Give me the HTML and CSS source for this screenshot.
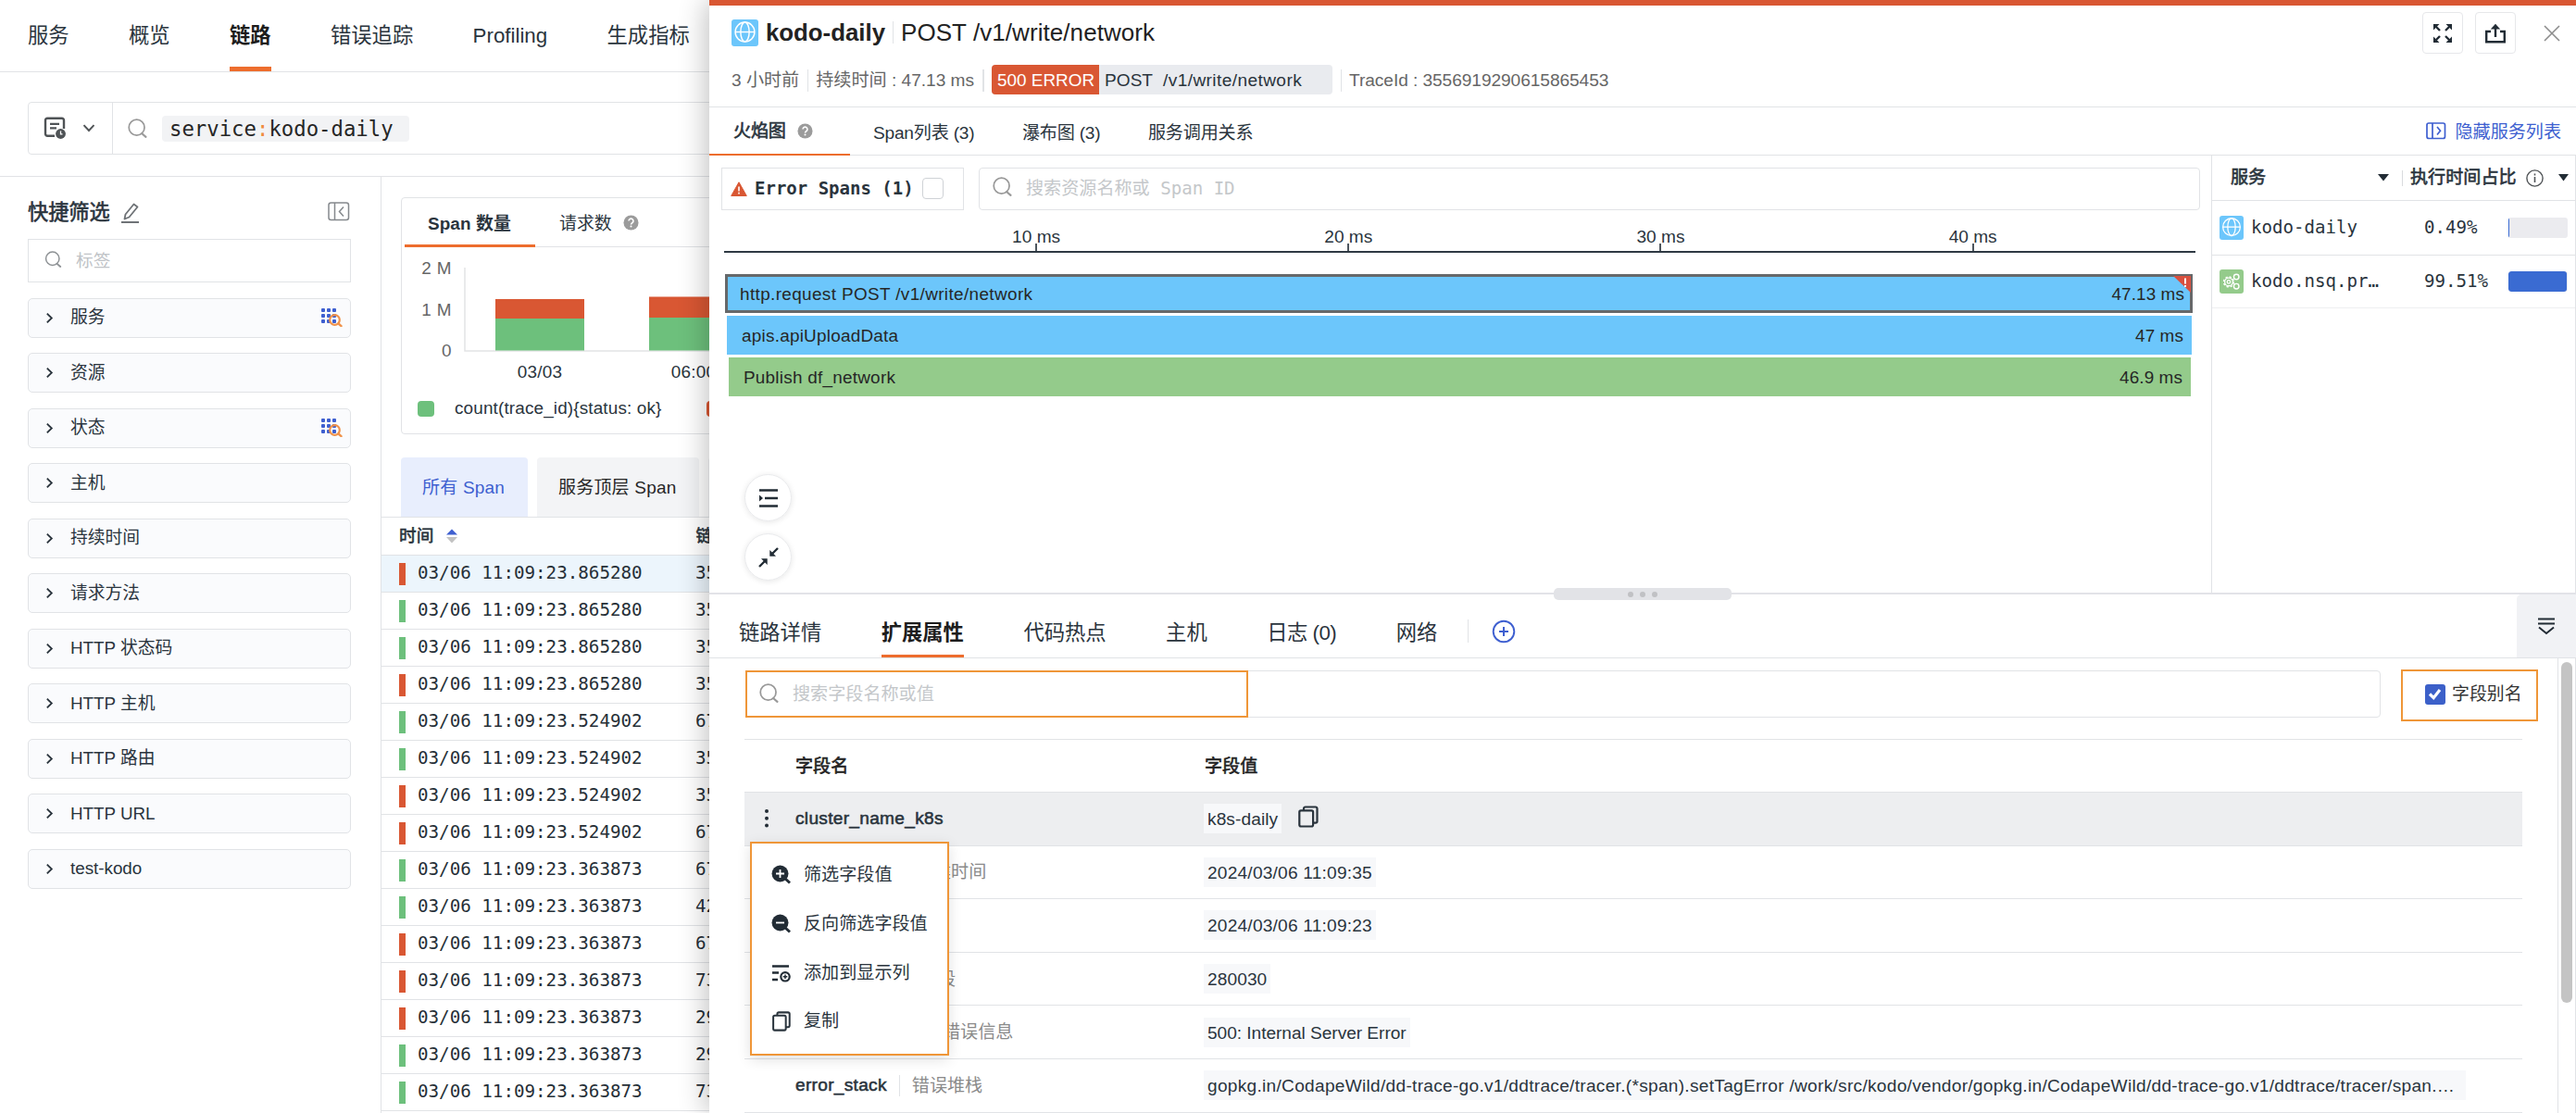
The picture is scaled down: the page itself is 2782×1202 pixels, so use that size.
FILE: index.html
```html
<!DOCTYPE html>
<html lang="zh-CN">
<head>
<meta charset="utf-8">
<title>链路</title>
<link rel="stylesheet" href="styles.css">
</head>
<body>
<svg class="defs" width="0" height="0">
  <symbol id="i-search" viewBox="0 0 24 24"><circle cx="11" cy="11" r="9.6" fill="none" stroke="currentColor" stroke-width="2"/><path d="M17.5 18.5l4.8 4.2" fill="none" stroke="currentColor" stroke-width="2.4" stroke-linecap="round"/></symbol>
  <symbol id="i-chev" viewBox="0 0 10 14"><path d="M2 1.5l5.6 5.5L2 12.5" fill="none" stroke="currentColor" stroke-width="2"/></symbol>
  <symbol id="i-help" viewBox="0 0 18 18"><circle cx="9" cy="9" r="8.5" fill="#9b9b9b"/><path d="M6.4 7a2.6 2.6 0 1 1 4 2.2c-.9.6-1.4.9-1.4 1.9" fill="none" stroke="#fff" stroke-width="1.7"/><circle cx="9" cy="13.3" r="1.1" fill="#fff"/></symbol>
  <symbol id="i-grid" viewBox="0 0 24 20"><g fill="#3e5fd0"><rect x="0" y="0" width="4" height="4" rx="1"/><rect x="6" y="0" width="4" height="4" rx="1"/><rect x="12" y="0" width="4" height="4" rx="1"/><rect x="0" y="6" width="4" height="4" rx="1"/><rect x="6" y="6" width="4" height="4" rx="1"/><rect x="12" y="6" width="4" height="4" rx="1"/><rect x="0" y="12" width="4" height="4" rx="1"/><rect x="6" y="12" width="4" height="4" rx="1"/><rect x="12" y="12" width="4" height="4" rx="1"/></g><circle cx="14.5" cy="12.5" r="5.3" fill="none" stroke="#f0924a" stroke-width="2.2"/><path d="M18.500 16.500l3 2.600" stroke="#f0924a" stroke-width="2.400" stroke-linecap="round"/></symbol>
  <symbol id="i-globe" viewBox="0 0 30 30"><g fill="none" stroke="#fff" stroke-width="1.5"><circle cx="15" cy="14" r="10.8"/><ellipse cx="15" cy="14" rx="4.8" ry="10.8"/><path d="M4.200 14h21.600"/></g></symbol>
  <symbol id="i-gears" viewBox="0 0 30 30"><g fill="none" stroke="#fff"><circle cx="11.5" cy="15.500" r="6.300" stroke-dasharray="2.600 2.350" stroke-width="1.600"/><circle cx="11.500" cy="15.500" r="5" stroke-width="1.500"/><circle cx="11.500" cy="15.500" r="2" stroke-width="1.500"/><circle cx="21" cy="9.300" r="3.200" stroke-width="1.600"/><circle cx="21" cy="21" r="3.200" stroke-width="1.600"/></g></symbol>
  <symbol id="i-copy" viewBox="0 0 22 24"><path d="M6 5.500V3.200A1.700 1.700 0 0 1 7.700 1.500H18.800A1.700 1.700 0 0 1 20.500 3.200V17A1.700 1.700 0 0 1 18.800 18.700H16.500" fill="none" stroke="currentColor" stroke-width="2.200"/><rect x="1.300" y="5.300" width="14.800" height="17.200" rx="1.700" fill="none" stroke="currentColor" stroke-width="2.200"/></symbol>
</svg>

<div class="app">
  <nav class="topnav">
    <a>服务</a><a>概览</a><a class="on">链路</a><a>错误追踪</a><a>Profiling</a><a>生成指标</a>
  </nav>
  <div class="querybar">
    <div class="query">
      <div class="query-menu">
        <svg width="24" height="26" viewBox="0 0 24 26"><path d="M22 13V4a2.200 2.200 0 0 0-2.200-2.200H4.200A2.200 2.200 0 0 0 2 4v14.500a2.200 2.200 0 0 0 2.200 2.200H12" fill="none" stroke="#4f5356" stroke-width="2.400"/><path d="M7 7.800h10M7 12.300h7" stroke="#4f5356" stroke-width="2.200"/><circle cx="18.500" cy="18.500" r="5.400" fill="#4f5356"/><path d="M18.500 15.500v3.300h2" fill="none" stroke="#fff" stroke-width="1.300"/></svg>
        <svg width="14" height="9" viewBox="0 0 14 9"><path d="M1.500 1.200L7 7l5.500-5.800" fill="none" stroke="#4f5356" stroke-width="1.900"/></svg>
      </div>
      <svg class="q-ico" width="23" height="21"><use href="#i-search"/></svg>
      <span class="q-tag">service<i>:</i>kodo-daily</span>
    </div>
  </div>
  <div class="content">
    <aside class="side">
      <div class="side-head"><span>快捷筛选</span>
        <svg width="22" height="24" viewBox="0 0 22 24"><path d="M4.500 18.500l1-5L14.500 2.500l4 3L9.500 16.500z" fill="none" stroke="#6f7377" stroke-width="1.800" stroke-linejoin="round"/><path d="M1 22h19" stroke="#6f7377" stroke-width="2"/></svg>
        <svg class="fold" width="24" height="21" viewBox="0 0 24 21"><rect x="1" y="1" width="21.500" height="18.500" rx="2.500" fill="none" stroke="#85898d" stroke-width="1.500"/><path d="M7.500 1v18.500M17 5.500l-4.500 5 4.500 5" fill="none" stroke="#85898d" stroke-width="1.500"/></svg>
      </div>
      <div class="side-search"><svg width="21" height="18"><use href="#i-search"/></svg><span>标签</span></div>
      <div class="facets">
        <div class="facet"><svg width="9" height="13"><use href="#i-chev"/></svg><span>服务</span><svg class="fg" width="24" height="20"><use href="#i-grid"/></svg></div>
        <div class="facet"><svg width="9" height="13"><use href="#i-chev"/></svg><span>资源</span></div>
        <div class="facet"><svg width="9" height="13"><use href="#i-chev"/></svg><span>状态</span><svg class="fg" width="24" height="20"><use href="#i-grid"/></svg></div>
        <div class="facet"><svg width="9" height="13"><use href="#i-chev"/></svg><span>主机</span></div>
        <div class="facet"><svg width="9" height="13"><use href="#i-chev"/></svg><span>持续时间</span></div>
        <div class="facet"><svg width="9" height="13"><use href="#i-chev"/></svg><span>请求方法</span></div>
        <div class="facet"><svg width="9" height="13"><use href="#i-chev"/></svg><span>HTTP 状态码</span></div>
        <div class="facet"><svg width="9" height="13"><use href="#i-chev"/></svg><span>HTTP 主机</span></div>
        <div class="facet"><svg width="9" height="13"><use href="#i-chev"/></svg><span>HTTP 路由</span></div>
        <div class="facet"><svg width="9" height="13"><use href="#i-chev"/></svg><span>HTTP URL</span></div>
        <div class="facet"><svg width="9" height="13"><use href="#i-chev"/></svg><span>test-kodo</span></div>
      </div>
    </aside>
    <main class="main">
      <section class="card">
        <div class="card-tabs"><span class="on">Span 数量</span><span>请求数</span><svg width="17" height="17"><use href="#i-help"/></svg></div>
        <svg class="chart" width="400" height="150" viewBox="434 267 400 150">
          <g class="ylab"><text x="488" y="296">2 M</text><text x="488" y="341">1 M</text><text x="488" y="385">0</text></g>
          <path d="M502 289V379H834" fill="none" stroke="#e2e3e5" stroke-width="1.500"/>
          <rect x="535" y="323" width="96" height="21" fill="#d95733"/><rect x="535" y="344" width="96" height="34.500" fill="#6dc07c"/>
          <rect x="701" y="320.500" width="96" height="22.500" fill="#d95733"/><rect x="701" y="343" width="96" height="35.500" fill="#6dc07c"/>
          <g class="xlab"><text x="583" y="408">03/03</text><text x="749" y="408">06:00</text></g>
        </svg>
        <div class="legend"><b class="ok"></b><span>count(trace_id){status: ok}</span><b class="err"></b></div>
      </section>
      <div class="span-tabs"><span class="on">所有 Span</span><span>服务顶层 Span</span><span class="more"></span></div>
      <div class="list">
        <div class="lh"><span>时间</span><svg width="12" height="16" viewBox="0 0 12 16"><path d="M0 6.500L6 .5l6 6z" fill="#3e5fd0"/><path d="M0 9l6 6.500L12 9z" fill="#c2c2c2"/></svg><span class="c2">链路 ID</span></div>
        <div class="lr sel"><b class="err"></b><span>03/06 11:09:23.865280</span><em>35569192</em></div>
        <div class="lr"><b class="ok"></b><span>03/06 11:09:23.865280</span><em>35569192</em></div>
        <div class="lr"><b class="ok"></b><span>03/06 11:09:23.865280</span><em>35569192</em></div>
        <div class="lr"><b class="err"></b><span>03/06 11:09:23.865280</span><em>35569192</em></div>
        <div class="lr"><b class="ok"></b><span>03/06 11:09:23.524902</span><em>67</em></div>
        <div class="lr"><b class="ok"></b><span>03/06 11:09:23.524902</span><em>35</em></div>
        <div class="lr"><b class="err"></b><span>03/06 11:09:23.524902</span><em>35</em></div>
        <div class="lr"><b class="err"></b><span>03/06 11:09:23.524902</span><em>67</em></div>
        <div class="lr"><b class="ok"></b><span>03/06 11:09:23.363873</span><em>67</em></div>
        <div class="lr"><b class="ok"></b><span>03/06 11:09:23.363873</span><em>42</em></div>
        <div class="lr"><b class="err"></b><span>03/06 11:09:23.363873</span><em>67</em></div>
        <div class="lr"><b class="err"></b><span>03/06 11:09:23.363873</span><em>73</em></div>
        <div class="lr"><b class="err"></b><span>03/06 11:09:23.363873</span><em>29</em></div>
        <div class="lr"><b class="ok"></b><span>03/06 11:09:23.363873</span><em>29</em></div>
        <div class="lr"><b class="ok"></b><span>03/06 11:09:23.363873</span><em>73</em></div>
      </div>
    </main>
  </div>

  <div class="drawer">
    <header class="dh">
      <div class="dh-title">
        <span class="svc blue"><svg width="29" height="29"><use href="#i-globe"/></svg></span>
        <strong>kodo-daily</strong><i></i><span class="res">POST /v1/write/network</span>
        <div class="dh-btns">
          <span class="btn"><svg width="22" height="22" viewBox="0 0 22 22"><g fill="none" stroke="#222c35" stroke-width="2.400"><path d="M2 2l6 6M20 2l-6 6M2 20l6-6M20 20l-6-6"/></g><path d="M1 1h6.500L1 7.500zM21 1v6.500L14.500 1zM1 21v-6.500L7.500 21zM21 21h-6.500l6.500-6.500z" fill="#222c35"/></svg></span>
          <span class="btn"><svg width="24" height="22" viewBox="0 0 24 22"><path d="M7 9H2.200v11.300h19.600V9H17" fill="none" stroke="#222c35" stroke-width="2.400"/><path d="M12 15V4" stroke="#222c35" stroke-width="2.400"/><path d="M6.800 6.500L12 .8l5.200 5.700z" fill="#222c35"/></svg></span>
          <svg class="close" width="18" height="18" viewBox="0 0 18 18"><path d="M1 1l16 16M17 1L1 17" stroke="#8c8c8c" stroke-width="1.600"/></svg>
        </div>
      </div>
      <div class="dh-meta">
        <span class="m1">3 小时前</span><i></i><span class="m2">持续时间 : 47.13 ms</span><i class="w2"></i>
        <span class="http"><b>500 ERROR</b><span>POST</span><span class="path">/v1/write/network</span></span><i></i><span class="m3">TraceId : 3556919290615865453</span>
      </div>
    </header>
    <div class="dtabs">
      <span class="on">火焰图 <svg width="17" height="17"><use href="#i-help"/></svg></span><span>Span列表 (3)</span><span>瀑布图 (3)</span><span>服务调用关系</span>
      <a><svg width="22" height="19" viewBox="0 0 22 19"><rect x="1" y="1" width="19.500" height="16.500" rx="2" fill="none" stroke="#3e5fd0" stroke-width="1.700"/><path d="M7 1v16.500M12 5l3.500 4.200L12 13.500" fill="none" stroke="#3e5fd0" stroke-width="1.700"/></svg>隐藏服务列表</a>
    </div>
    <div class="upper">
      <div class="flame">
        <div class="tools">
          <div class="errbox"><svg width="18" height="16" viewBox="0 0 18 16"><path d="M9 .8L17.300 15.500H.7z" fill="#d95733" stroke="#d95733" stroke-linejoin="round"/><path d="M9 5.500v5M9 11.800v1.600" stroke="#fff" stroke-width="1.600"/></svg><span>Error Spans (1)</span><i></i></div>
          <div class="search"><svg width="23" height="21"><use href="#i-search"/></svg><span>搜索资源名称或 Span ID</span></div>
        </div>
        <div class="axis"><span>10 ms</span><span>20 ms</span><span>30 ms</span><span>40 ms</span></div>
        <div class="bars">
          <div class="bar root"><span>http.request POST /v1/write/network</span><span class="ms">47.13 ms</span>
            <svg class="flag" width="19" height="18" viewBox="0 0 19 18"><path d="M0 0h19v18z" fill="#d9503f"/><path d="M13 2.500v6M13 10v2" stroke="#fff" stroke-width="2"/></svg></div>
          <div class="bar b2"><span>apis.apiUploadData</span><span class="ms">47 ms</span></div>
          <div class="bar b3"><span>Publish df_network</span><span class="ms">46.9 ms</span></div>
        </div>
        <div class="rounds">
          <span><svg width="20" height="20" viewBox="0 0 20 20"><path d="M0 1.500h20M6 10h14M0 18.500h20" stroke="#222c35" stroke-width="2.400"/><path d="M0 6.500l4 3.500-4 3.500z" fill="#222c35"/></svg></span>
          <span><svg width="22" height="22" viewBox="0 0 22 22"><path d="M21 1l-6 6M1 21l6-6" stroke="#222c35" stroke-width="2.400"/><path d="M12.300 3v6.700h6.700zM9.700 19v-6.700H3z" fill="#222c35"/></svg></span>
        </div>
      </div>
      <div class="svcs">
        <div class="sh"><span>服务</span><svg width="12" height="8"><path d="M0 0h12L6 7.500z" fill="#222c35"/></svg><i></i><span>执行时间占比</span>
          <svg width="19" height="19" viewBox="0 0 19 19"><circle cx="9.500" cy="9.500" r="8.600" fill="none" stroke="#4f5356" stroke-width="1.400"/><path d="M9.500 8v6M9.500 4.500v2" stroke="#4f5356" stroke-width="1.600"/></svg><svg width="11" height="8"><path d="M0 0h11L5.500 7.500z" fill="#222c35"/></svg></div>
        <div class="sr"><span class="svc sm blue"><svg width="26" height="26"><use href="#i-globe"/></svg></span><span class="n">kodo-daily</span><span class="p">0.49%</span><span class="meter"><b style="width:1px"></b></span></div>
        <div class="sr r2"><span class="svc sm green"><svg width="26" height="26"><use href="#i-gears"/></svg></span><span class="n">kodo.nsq.pr…</span><span class="p">99.51%</span><span class="meter"><b style="width:63px"></b></span></div>
      </div>
      <div class="handle"><b></b><b></b><b></b></div>
    </div>
    <div class="ptabs">
      <span>链路详情</span><span class="on">扩展属性</span><span>代码热点</span><span>主机</span><span class="log">日志 (0)</span><span>网络</span><i></i>
      <svg width="26" height="26" viewBox="0 0 26 26"><circle cx="13" cy="13" r="11.300" fill="none" stroke="#3e5fd0" stroke-width="1.900"/><path d="M13 8v10M8 13h10" stroke="#3e5fd0" stroke-width="2"/></svg>
      <div class="pfold"><svg width="18" height="19" viewBox="0 0 18 19"><path d="M0 1.600h18M0 6.500h18M1 10.500l8 6.500 8-6.500" fill="none" stroke="#222c35" stroke-width="2"/></svg></div>
    </div>
    <div class="attrs">
      <div class="attrs-main">
        <div class="afilter">
          <div class="search"><svg width="23" height="21"><use href="#i-search"/></svg><span>搜索字段名称或值</span><div class="hl"></div></div>
          <div class="alias"><svg width="22" height="22" viewBox="0 0 22 22"><rect width="22" height="22" rx="3" fill="#3c60c9"/><path d="M5 10.500l4.200 4.200L16 6" fill="none" stroke="#fff" stroke-width="3.200"/></svg><span>字段别名</span></div>
        </div>
        <div class="table">
          <div class="tr th"><span class="k">字段名</span><span class="v">字段值</span></div>
          <div class="tr hov"><svg class="dots" width="4" height="20" viewBox="0 0 4 20"><g fill="#222c35"><circle cx="2" cy="2" r="2"/><circle cx="2" cy="9.700" r="2"/><circle cx="2" cy="17.500" r="2"/></g></svg><span class="k"><b>cluster_name_k8s</b></span><span class="v"><em>k8s-daily</em><svg width="22" height="24"><use href="#i-copy"/></svg></span>
            <div class="menu">
              <div><svg width="22" height="22" viewBox="0 0 22 22"><circle cx="9.500" cy="9.500" r="9" fill="#222c35"/><path d="M14 14l6 5.500" stroke="#222c35" stroke-width="3"/><path d="M9.500 5v9M5 9.500h9" stroke="#fff" stroke-width="1.800"/></svg>筛选字段值</div>
              <div><svg width="22" height="22" viewBox="0 0 22 22"><circle cx="9.500" cy="9.500" r="9" fill="#222c35"/><path d="M14 14l6 5.500" stroke="#222c35" stroke-width="3"/><path d="M5 9.500h9" stroke="#fff" stroke-width="1.800"/></svg>反向筛选字段值</div>
              <div><svg width="22" height="22" viewBox="0 0 22 22"><path d="M1 3.500h18M1 10.500h7M1 18h6" stroke="#222c35" stroke-width="2.400"/><circle cx="15" cy="14.800" r="4.700" fill="none" stroke="#222c35" stroke-width="2.200"/><path d="M15 12.500v4.600M12.700 14.800h4.600" stroke="#222c35" stroke-width="1.500"/></svg>添加到显示列</div>
              <div><svg width="22" height="22"><use href="#i-copy"/></svg>复制</div>
            </div>
          </div>
          <div class="tr"><span class="k in1"><u>建时间</u></span><span class="v"><em class="date">2024/03/06 11:09:35</em></span></div>
          <div class="tr"><span class="k"></span><span class="v"><em class="date">2024/03/06 11:09:23</em></span></div>
          <div class="tr"><span class="k in2"><u>段</u></span><span class="v"><em>280030</em></span></div>
          <div class="tr"><span class="k in3"><u>错误信息</u></span><span class="v"><em class="msg">500: Internal Server Error</em></span></div>
          <div class="tr"><span class="k"><b>error_stack</b><i></i><u>错误堆栈</u></span><span class="v"><em class="long">gopkg.in/CodapeWild/dd-trace-go.v1/ddtrace/tracer.(*span).setTagError /work/src/kodo/vendor/gopkg.in/CodapeWild/dd-trace-go.v1/ddtrace/tracer/span.…</em></span></div>
        </div>
      </div>
      <div class="sbar"><b></b></div>
    </div>
  </div>
</div>
</body>
</html>
```

FILE: styles.css
```css
* { box-sizing: border-box; }
body { margin: 0; background: #fff; font: 19.1px/28px "Liberation Sans", "Noto Sans CJK SC", sans-serif; color: #2a343d; }
svg { display: block; flex: none; }
i, em { font-style: normal; }
u { text-decoration: none; }
.defs { position: absolute; }
.app { position: relative; width: 2782px; height: 1202px; overflow: hidden; }

/* page behind the drawer */
.topnav { display: flex; gap: 64.4px; height: 78px; padding-left: 30px; border-bottom: 1px solid #e1e3e6; font-size: 22.3px; white-space: nowrap; }
.topnav a { position: relative; height: 77px; line-height: 78px; }
.topnav .on { font-weight: bold; color: #1d1d1d; }
.topnav .on::after { content: ""; position: absolute; left: 0; right: 0; bottom: 0; height: 5px; background: #ed6d2d; }
.querybar { height: 113px; padding: 32px 0 0 30px; border-bottom: 1px solid #e1e3e6; }
.query { display: flex; align-items: center; width: 1200px; height: 57px; border: 1px solid #e1e3e6; border-radius: 4px; }
.query-menu { display: flex; align-items: center; gap: 18px; width: 91px; height: 55px; padding-left: 16px; border-right: 1px solid #e1e3e6; }
.q-ico { margin: 0 15px 0 15px; color: #9a9a9a; }
.q-tag { height: 28px; padding: 0 17px 0 8px; border-radius: 4px; background: #f2f3f5; font: 22.3px/29px "DejaVu Sans Mono", monospace; color: #262626; margin-top: 1px; }
.q-tag i { color: #f08a3c; }
.content { display: flex; }
.side { width: 411px; height: 1011px; padding: 0 32px 0 30px; }
.side-head { display: flex; align-items: center; gap: 11px; height: 67px; padding-top: 10px; font-size: 22.2px; -webkit-text-stroke: .6px #2a343d; }
.side-head .fold { margin: 0 1px 2px auto; }
.side-search { display: flex; align-items: center; gap: 14px; height: 47px; padding-left: 16px; border: 1px solid #e1e3e6; color: #c0c3c7; font-size: 18.7px; }
.side-search svg { color: #8d9194; margin-bottom: 3px; }
.facets { display: flex; flex-direction: column; gap: 16.550px; margin-top: 16.500px; }
.facet { display: flex; align-items: center; height: 43px; padding-left: 18px; border: 1px solid #e1e3e6; border-radius: 5px; background: #fafbfd; font-size: 18.8px; }
.facet span { margin-left: 18px; }
.facet .fg { margin: 0 7px 0 auto; }
.main { width: 2371px; border-left: 1px solid #e1e3e6; }
.card { width: 1800px; height: 256px; margin: 22px 0 25px 21px; border: 1px solid #e1e3e6; border-radius: 4px; }
.card-tabs { display: flex; align-items: center; height: 53px; margin-left: 3px; border-bottom: 1px solid #e1e3e6; }
.card-tabs span { height: 53px; line-height: 55px; }
.card-tabs .on { width: 141px; padding-left: 25px; border-bottom: 3px solid #ed6d2d; font-weight: bold; font-size: 18.9px; letter-spacing: .1px; }
.card-tabs span + span { margin: 0 12px 0 26px; font-size: 18.9px; }
.chart { overflow: visible; }
.chart text { font-size: 18.9px; fill: #2a343d; }
.chart .ylab text { text-anchor: end; fill: #666; letter-spacing: .4px; }
.chart .xlab text { text-anchor: middle; letter-spacing: .2px; }
.legend { display: flex; align-items: center; height: 48px; padding-left: 17px; }
.legend b { width: 18px; height: 17px; border-radius: 4px; }
.legend span { width: 272px; margin-left: 22px; font-size: 18.9px; letter-spacing: .15px; }
.ok { background: #6dc07c; }
.err { background: #d95733; }
.span-tabs { display: flex; gap: 10px; height: 64px; margin-left: 21px; }
.span-tabs span { width: 175px; padding-left: 23px; border-radius: 4px 4px 0 0; background: #f3f4f6; line-height: 66px; font-size: 19px; letter-spacing: .2px; color: #262626; white-space: nowrap; }
.span-tabs .on { width: 137px; background: #e8eefd; color: #3e5fd0; }
.lh, .lr { display: flex; align-items: center; height: 40px; border-bottom: 1px solid #e1e3e6; padding-left: 19px; }
.lh { height: 42px; border-top: 1px solid #e1e3e6; font-size: 18.7px; -webkit-text-stroke: .6px #2a343d; white-space: nowrap; }
.lh svg { margin-left: 14px; }
.lh .c2 { margin-left: 257px; }
.lr { font: 19.200px/28px "DejaVu Sans Mono", monospace; color: #262f37; }
.lr b { width: 7px; height: 24px; margin-right: 13px; }
.lr span { width: 300px; margin-bottom: 2px; }
.lr em { margin-bottom: 2px; }
.sel { background: #ecf5fc; }

/* drawer */
.drawer { position: absolute; left: 766px; top: 0; width: 2016px; height: 1202px; background: #fff; border-top: 6px solid #d95733; box-shadow: -4px 0 28px rgba(0, 0, 0, .24); }
.dh { height: 110px; border-bottom: 1px solid #e1e3e6; }
.dh-title { display: flex; align-items: center; height: 58px; padding-left: 24px; color: #222; font-size: 26px; }
.res { letter-spacing: .07px; }
.svc { display: block; width: 29px; height: 29px; border-radius: 3px; }
.svc.sm { width: 26px; height: 26px; }
.blue { background: #6cc6fb; }
.green { background: #94cb8b; }
.dh-title strong { margin-left: 8px; font-size: 25.800px; }
.dh-title i { width: 1px; height: 24px; margin: 0 8px; background: #e1e3e6; }
.dh-btns { display: flex; align-items: center; gap: 13px; margin: 1px 17px 0 auto; }
.btn { display: flex; align-items: center; justify-content: center; width: 44px; height: 45px; border: 1px solid #e6e7ea; border-radius: 4px; }
.close { margin-left: 17px; }
.dh-meta { display: flex; align-items: center; height: 44px; padding: 1px 0 0 24px; color: #666; white-space: nowrap; }
.dh-meta > i { width: 1px; height: 24px; margin: 0 8.500px; background: #e1e3e6; }
.dh-meta > i.w2 { width: 2px; margin: 0 8.500px; }
.m3 { letter-spacing: -.05px; }
.http { display: flex; width: 368px; height: 32px; margin-top: -1px; border-radius: 4px; overflow: hidden; background: #e9ebef; color: #2a343d; line-height: 33px; }
.http b { width: 116px; margin-right: 6px; padding-left: 6px; background: #d95733; color: #fff; font-weight: normal; font-size: 18.900px; }
.http .path { margin-left: 11px; letter-spacing: .4px; }
.dtabs { display: flex; height: 52px; border-bottom: 1px solid #e1e3e6; line-height: 55px; white-space: nowrap; }
.dtabs .on { display: flex; align-items: center; gap: 12px; width: 152px; height: 52px; padding: 1px 0 0 26px; border-bottom: 2px solid #ed6d2d; -webkit-text-stroke: .6px #2a343d; }
.dtabs span { margin-right: 51.500px; letter-spacing: -.2px; }
.dtabs .on { margin-right: 25px; }
.dtabs a { display: flex; align-items: center; gap: 9px; margin: 2px 16px 0 auto; color: #3e5fd0; font-size: 19.100px; }
.dtabs a svg { margin-bottom: 2px; }
.upper { position: relative; display: flex; height: 474px; border-bottom: 2px solid #e2e3e8; }
.flame { width: 1622px; padding: 13px 12px 0 13px; }
.tools { display: flex; gap: 16px; height: 46px; }
.errbox { display: flex; align-items: center; width: 262px; padding-left: 9px; border: 1px solid #e1e3e6; font: bold 19px/28px "DejaVu Sans Mono", monospace; white-space: nowrap; }
.errbox span { margin: -2px 9px 0 8px; }
.errbox i { width: 23px; height: 23px; border: 1px solid #cfd2d6; border-radius: 4px; margin-top: -1px; }
.search { display: flex; align-items: center; gap: 14px; flex: 1; padding-left: 13px; border: 1px solid #e1e3e6; border-radius: 4px; color: #c4c7ca; font: 19.100px/28px "DejaVu Sans Mono", "Noto Sans CJK SC", monospace; }
.search svg { color: #999; margin-bottom: 5px; }
.axis { display: flex; width: 1589px; height: 46px; margin-left: 3px; padding-left: 168.500px; border-bottom: 2px solid #2f3943; }
.axis span { position: relative; width: 337.200px; text-align: center; line-height: 58px; }
.axis span::after { content: ""; position: absolute; left: calc(50% - 1px); bottom: 0; width: 2px; height: 8px; background: #4d565e; }
.bars { display: flex; flex-direction: column; gap: 3px; margin: 23px 0 0 4px; width: 1585px; }
.bar { position: relative; display: flex; align-items: center; justify-content: space-between; height: 42px; padding-top: 1px; background: #6cc6fb; color: #262626; font-size: 18.900px; letter-spacing: .25px; }
.bar .ms { letter-spacing: .1px; }
.root { border: 3px solid #66686a; padding: 1px 6px 0 13px; letter-spacing: .38px; }
.b2 { margin: 0 1px 0 2px; padding-right: 9px; padding-left: 16px; }
.b3 { margin: 0 2px 0 4px; padding-right: 9px; padding-left: 16px; background: #94cb8b; }
.flag { position: absolute; right: -1px; top: -1px; }
.rounds { display: flex; flex-direction: column; gap: 13px; margin: 84px 0 0 25px; }
.rounds span { display: flex; align-items: center; justify-content: center; width: 51px; height: 51px; border: 1px solid #e9eaec; border-radius: 50%; box-shadow: 0 1px 6px rgba(0, 0, 0, .1); }
.svcs { width: 394px; border: solid #e1e3e6; border-width: 0 1px; }
.sh { display: flex; align-items: center; height: 49px; padding-left: 20px; border-bottom: 1px solid #e1e3e6; -webkit-text-stroke: .6px #2a343d; white-space: nowrap; }
.sh svg { -webkit-text-stroke: 0; }
.sh span:first-child { width: 159px; }
.sh i { width: 1px; height: 17px; margin: 0 8px 0 14px; background: #d9dbde; }
.sh svg:nth-last-child(2) { margin: 0 16px 0 10px; }
.sr { display: flex; align-items: center; height: 59px; padding-left: 8px; border-bottom: 1px solid #e1e3e6; font: 19.100px/28px "DejaVu Sans Mono", "Noto Sans CJK SC", monospace; }
.sr.r2 { height: 57px; border-color: #eeeff1; }
.sr .n { width: 187px; margin-left: 8px; }
.sr .p { width: 91px; }
.meter { width: 64px; height: 22px; border-radius: 3px; background: #ebebef; overflow: hidden; }
.meter b { display: block; height: 22px; background: #3a6bd2; border-radius: inherit; }
.handle { position: absolute; left: 912px; bottom: -8px; display: flex; align-items: center; justify-content: center; gap: 7px; width: 192px; height: 13px; border-radius: 5px; background: #e2e3e7; }
.handle b { width: 6px; height: 6px; border-radius: 50%; background: #c0c1c4; }
.ptabs { display: flex; align-items: center; height: 69px; padding-left: 32px; border-bottom: 1px solid #e1e3e6; font-size: 22.300px; white-space: nowrap; }
.ptabs span { position: relative; height: 68px; margin-right: 64.500px; line-height: 84px; }
.ptabs .log { letter-spacing: -.5px; }
.ptabs .on { font-weight: bold; color: #1d1d1d; }
.ptabs .on::after { content: ""; position: absolute; left: 0; right: 0; bottom: 0; height: 3px; background: #ed6d2d; }
.ptabs i { width: 1px; height: 25px; margin: 10px 25px 0 -32px; background: #e1e3e6; }
.ptabs > svg { margin-top: 12px; }
.pfold { display: flex; align-items: center; justify-content: center; width: 64px; height: 68px; margin-left: auto; border-radius: 5px 0 0 0; background: #f1f2f5; }
.attrs { display: flex; height: 491px; }
.attrs-main { width: 1996px; padding: 12px 0 0 38px; }
.afilter { display: flex; align-items: flex-start; }
.afilter .search { position: relative; flex: none; width: 1766px; height: 51px; margin: 1px 23px 0 1px; font-family: "Liberation Sans", "Noto Sans CJK SC", sans-serif; }
.afilter .search svg { margin-bottom: 3px; }
.hl { position: absolute; left: -1px; top: -1px; width: 543px; height: 51px; border: 2px solid #ef9638; }
.alias { display: flex; align-items: center; gap: 7px; width: 148px; height: 56px; padding-left: 24px; border: 2px solid #ef9638; font-size: 18.900px; color: #333; margin-left: -1px; }
.alias svg { margin-bottom: 3px; }
.alias span { margin-bottom: 2px; }
.table { width: 1920px; margin-top: 19px; border-top: 1px solid #e1e3e6; }
.tr { position: relative; display: flex; align-items: center; height: 57.600px; border-bottom: 1px solid #e1e3e6; padding-left: 55px; white-space: nowrap; }
.tr.th { height: 57px; padding-top: 2px; color: #222; -webkit-text-stroke: .6px #222; }
.hov { background: #edeef0; }
.dots { position: absolute; left: 22px; top: 18px; }
.k { display: flex; align-items: center; width: 441px; }
.k b { font-weight: normal; -webkit-text-stroke: .55px #2a343d; letter-spacing: .3px; }
.k i { width: 1px; height: 23px; margin: 0 13px; background: #e1e3e6; }
.k u { color: #8a8a8a; font-size: 19.100px; margin-top: 1px; }
.in1 { padding-left: 149px; }
.in2 { padding-left: 154px; }
.in3 { padding-left: 159px; }
.v { display: flex; align-items: center; gap: 18px; }
.th .v { padding-left: 1px; }
.v em { height: 32px; padding: 0 4px; line-height: 33px; background: #f7f8fa; letter-spacing: .1px; }
.v em.date { letter-spacing: .22px; }
.v em.msg { letter-spacing: -.03px; }
.v em.long { width: 1363px; letter-spacing: .29px; }
.v svg { margin-bottom: 5px; }
.menu { position: absolute; z-index: 2; left: 6px; top: 53px; width: 215px; height: 231px; padding: 8px 0 0 21px; border: 2px solid #ef9638; background: #fff; box-shadow: 0 4px 14px rgba(0, 0, 0, .12); }
.menu div { display: flex; align-items: center; gap: 13px; height: 52.700px; }
.sbar { width: 20px; border: solid #e1e3e6; border-width: 0 1px; padding: 4px 0 0 3px; }
.sbar b { display: block; width: 12px; height: 368px; border-radius: 6px; background: #c4c4c4; }
```
